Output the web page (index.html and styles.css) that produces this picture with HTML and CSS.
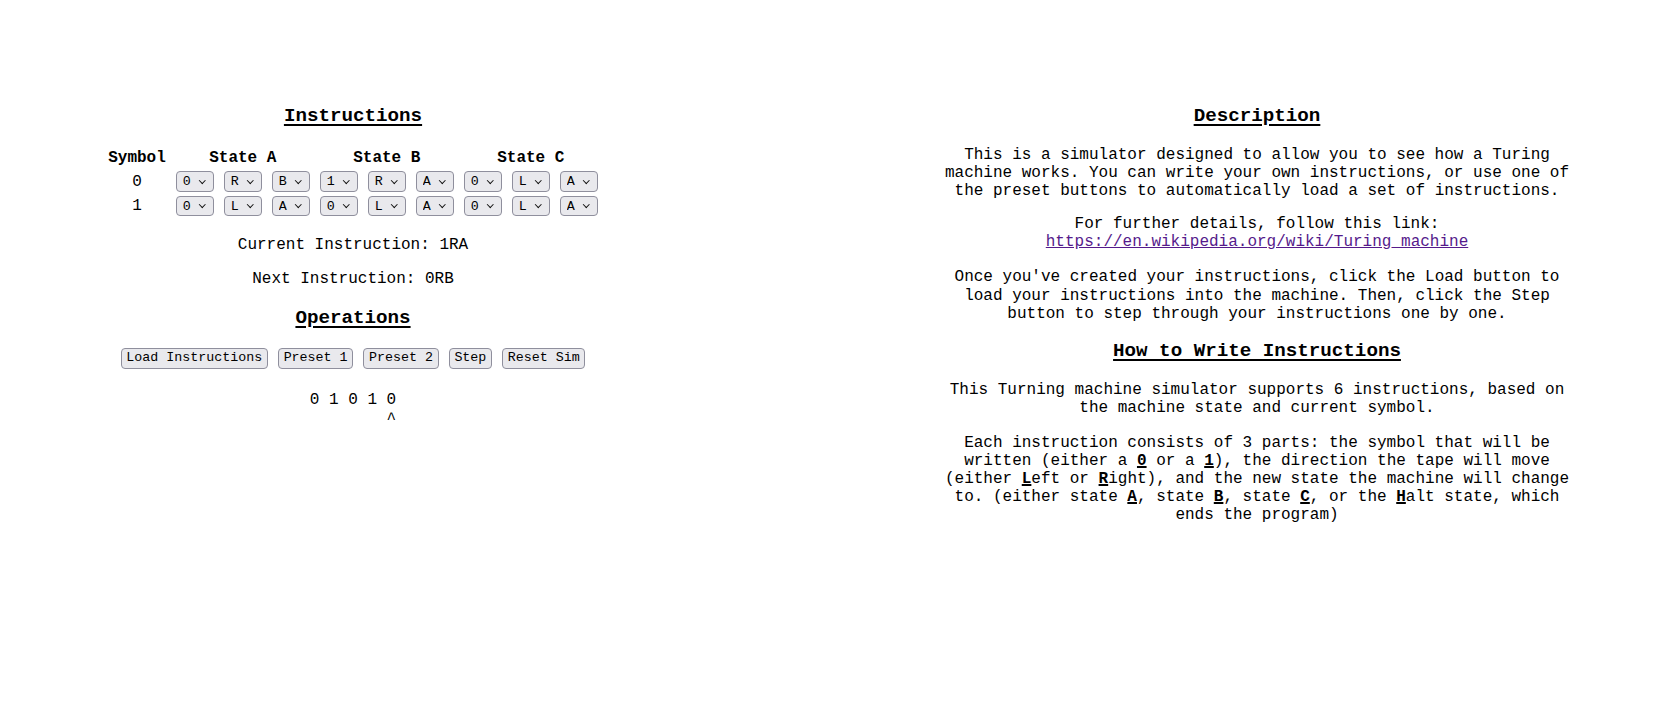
FILE: index.html
```html
<!DOCTYPE html>
<html lang="en">
<head>
<meta charset="utf-8">
<title>Turing Machine Simulator</title>
<link rel="stylesheet" href="styles.css">
</head>
<body>
<div class="page">
  <section class="panel left">
    <h2 class="heading">Instructions</h2>
    <table class="rules">
      <tr>
        <th>Symbol</th>
        <th colspan="3">State A</th>
        <th colspan="3">State B</th>
        <th colspan="3">State C</th>
      </tr>
      <tr>
        <td class="sym">0</td>
        <td><span class="sel"><select><option>0</option><option>1</option></select></span></td>
        <td><span class="sel"><select><option>R</option><option>L</option></select></span></td>
        <td><span class="sel"><select><option>B</option><option>A</option><option>C</option><option>H</option></select></span></td>
        <td><span class="sel"><select><option>1</option><option>0</option></select></span></td>
        <td><span class="sel"><select><option>R</option><option>L</option></select></span></td>
        <td><span class="sel"><select><option>A</option><option>B</option><option>C</option><option>H</option></select></span></td>
        <td><span class="sel"><select><option>0</option><option>1</option></select></span></td>
        <td><span class="sel"><select><option>L</option><option>R</option></select></span></td>
        <td><span class="sel"><select><option>A</option><option>B</option><option>C</option><option>H</option></select></span></td>
      </tr>
      <tr>
        <td class="sym">1</td>
        <td><span class="sel"><select><option>0</option><option>1</option></select></span></td>
        <td><span class="sel"><select><option>L</option><option>R</option></select></span></td>
        <td><span class="sel"><select><option>A</option><option>B</option><option>C</option><option>H</option></select></span></td>
        <td><span class="sel"><select><option>0</option><option>1</option></select></span></td>
        <td><span class="sel"><select><option>L</option><option>R</option></select></span></td>
        <td><span class="sel"><select><option>A</option><option>B</option><option>C</option><option>H</option></select></span></td>
        <td><span class="sel"><select><option>0</option><option>1</option></select></span></td>
        <td><span class="sel"><select><option>L</option><option>R</option></select></span></td>
        <td><span class="sel"><select><option>A</option><option>B</option><option>C</option><option>H</option></select></span></td>
      </tr>
    </table>
    <p class="status first">Current Instruction: 1RA</p>
    <p class="status">Next Instruction: 0RB</p>
    <h2 class="heading ops-title">Operations</h2>
    <div class="ops">
      <button>Load Instructions</button>
      <button>Preset 1</button>
      <button>Preset 2</button>
      <button>Step</button>
      <button>Reset Sim</button>
    </div>
    <div class="tape">0 1 0 1 0</div>
    <div class="tape-head">        ^</div>
  </section>

  <section class="panel right">
    <h2 class="heading">Description</h2>
    <p class="text p1">This is a simulator designed to allow you to see how a Turing machine works. You can write your own instructions, or use one of the preset buttons to automatically load a set of instructions.</p>
    <p class="text p2">For further details, follow this link: <a href="#wiki" class="link">https://en.wikipedia.org/wiki/Turing_machine</a></p>
    <p class="text p3">Once you've created your instructions, click the Load button to load your instructions into the machine. Then, click the Step button to step through your instructions one by one.</p>
    <h2 class="heading sub">How to Write Instructions</h2>
    <p class="text p4">This Turning machine simulator supports 6 instructions, based on the machine state and current symbol.</p>
    <p class="text p5">Each instruction consists of 3 parts: the symbol that will be written (either a <u><b>0</b></u> or a <u><b>1</b></u>), the direction the tape will move (either <u><b>L</b></u>eft or <u><b>R</b></u>ight), and the new state the machine will change to. (either state <u><b>A</b></u>, state <u><b>B</b></u>, state <u><b>C</b></u>, or the <u><b>H</b></u>alt state, which ends the program)</p>
  </section>
</div>
</body>
</html>
```

FILE: styles.css
```css
html, body {
  margin: 0;
  padding: 0;
  background: #ffffff;
}

body {
  font-family: "Liberation Mono", "DejaVu Sans Mono", monospace;
  font-size: 16px;
  color: #000000;
}

.page {
  display: flex;
  align-items: flex-start;
}

.panel {
  text-align: center;
  padding-top: 104.6px;
}

.left {
  width: 706px;
}

.right {
  width: 632px;
  margin-left: 235px;
}

.heading {
  margin: 0;
  font-size: 19.2px;
  line-height: 22px;
  font-weight: bold;
  text-decoration: underline;
  text-decoration-thickness: 2px;
  text-underline-offset: 3px;
}

.heading.sub {
  margin-top: 17.7px;
}

.rules {
  margin: 19.8px auto 0;
  border-collapse: separate;
  border-spacing: 2px;
}

.rules th {
  font-size: 16px;
  font-weight: bold;
  line-height: 18px;
  padding: 1px 4px;
}

.rules td {
  padding: 1px 4px;
  text-align: center;
  vertical-align: middle;
}

.rules td.sym {
  font-size: 16px;
  line-height: 18.13px;
}

.sel {
  display: block;
  position: relative;
  width: 38px;
  height: 20.5px;
}

.sel select {
  -webkit-appearance: none;
  appearance: none;
  display: block;
  width: 38px;
  height: 20.5px;
  margin: 0;
  padding: 0 0 0 6px;
  box-sizing: border-box;
  font-family: "Liberation Mono", "DejaVu Sans Mono", monospace;
  font-size: 13.33px;
  color: #000000;
  background: #e9e9ed;
  border: 1px solid #8f8f9d;
  border-radius: 4px;
  text-align: left;
}

.sel::after {
  content: "";
  position: absolute;
  right: 9px;
  top: 6.5px;
  width: 3.5px;
  height: 3.5px;
  border-right: 1.6px solid #111111;
  border-bottom: 1.6px solid #111111;
  transform: rotate(45deg);
  pointer-events: none;
}

.status {
  margin: 16px 0 0;
  line-height: 18.13px;
}

.status.first {
  margin-top: 16.6px;
}

.ops-title {
  margin-top: 18.9px;
}

.ops {
  margin-top: 19.1px;
  display: flex;
  justify-content: center;
  gap: 10px;
}

.ops button {
  height: 20.5px;
  margin: 0;
  padding: 0 4.7px;
  box-sizing: border-box;
  font-family: "Liberation Mono", "DejaVu Sans Mono", monospace;
  font-size: 13.33px;
  line-height: 18px;
  color: #000000;
  background: #e9e9ed;
  border: 1px solid #8f8f9d;
  border-radius: 4px;
}

.tape {
  margin-top: 21.9px;
  line-height: 18.13px;
  white-space: pre;
}

.tape-head {
  margin-top: 2.4px;
  line-height: 18.13px;
  white-space: pre;
}

.text {
  margin: 16px 0 0;
  font-size: 16px;
  line-height: 18.13px;
}

.text.p1 {
  margin-top: 19.4px;
}

.text.p2 {
  margin-top: 14.4px;
}

.text.p3 {
  margin-top: 17.4px;
}

.text.p4 {
  margin-top: 18.8px;
}

.text u {
  text-decoration-thickness: 2px;
}

.link {
  color: #551a8b;
  text-decoration: underline;
}
```
